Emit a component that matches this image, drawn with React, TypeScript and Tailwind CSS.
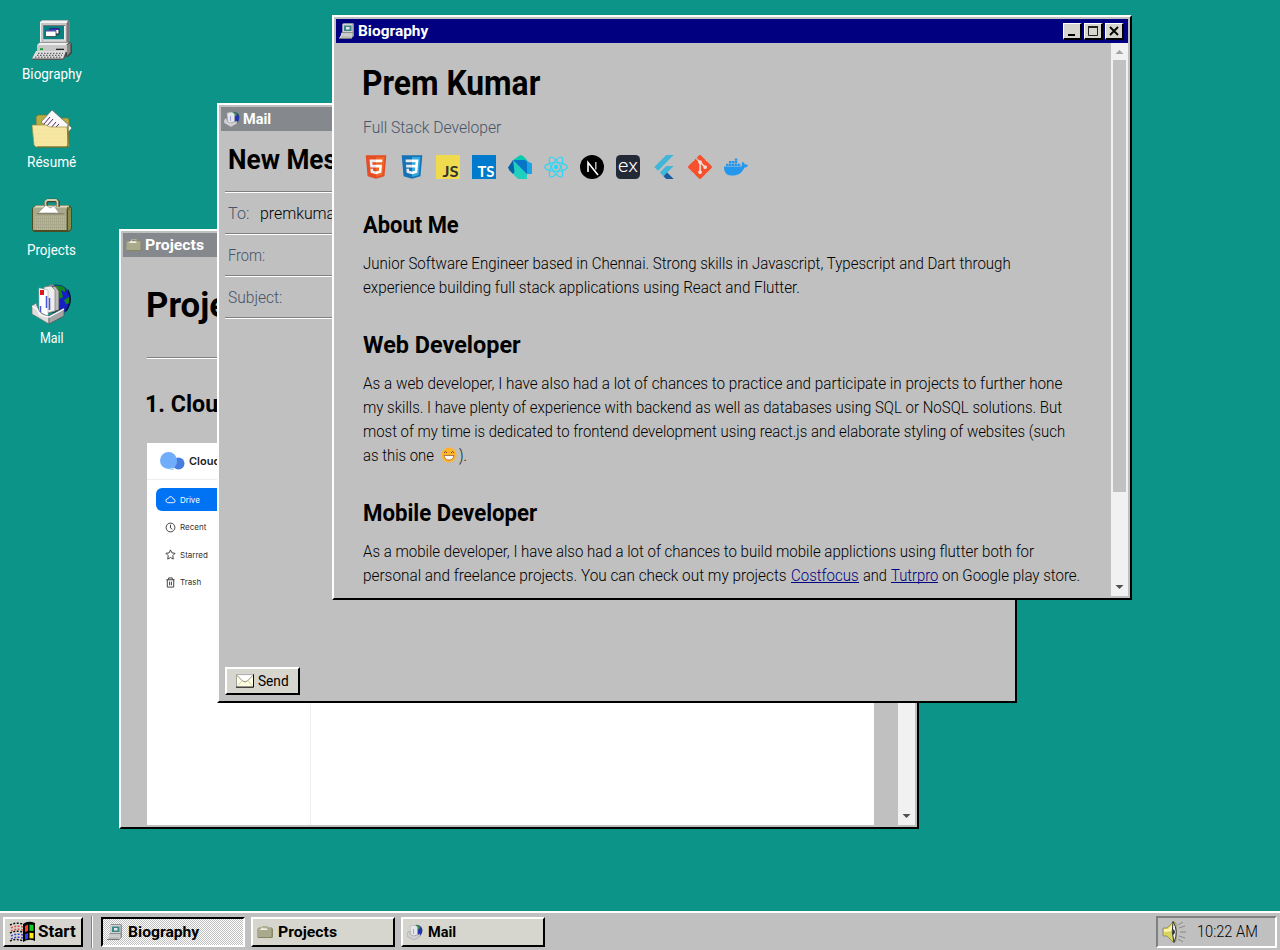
import { useLayoutEffect, useRef, useState } from "react";
import type { ReactNode } from "react";
import { SiDocker, SiGit } from "react-icons/si";

/* Single line of text whose glyphs are condensed to a given width. */
function Fit({ w, children, className = "" }: { w: number; children: ReactNode; className?: string }) {
  const ref = useRef<HTMLSpanElement>(null);
  const [scale, setScale] = useState(1);
  useLayoutEffect(() => {
    if (ref.current) setScale(w / ref.current.offsetWidth);
  }, [w]);
  return (
    <span className={`inline-block whitespace-nowrap ${className}`} style={{ width: w }}>
      <span ref={ref} className="inline-block origin-left" style={{ transform: `scaleX(${scale})` }}>
        {children}
      </span>
    </span>
  );
}

function ComputerIcon({ className }: { className: string }) {
  return (
    <svg viewBox="0 0 40 40" className={className}>
      <path d="M8 2 10 0H36L38 2V21L35 24H8z" fill="#808080" />
      <path d="M8 2H35V22H8z" fill="#c6c6c6" />
      <path d="M8 2 10 .5H36L35 2V3H9V22H8z" fill="#f2f2f2" />
      <path d="M35 3 37 1V21L34.5 24V3z" fill="#777" />
      <path d="M11 5H33V19H11z" fill="#777" />
      <path d="M12 6H32V19.500H12z" fill="#078080" />
      <path d="M32 6H33.500V20.500H12V19.500H32z" fill="#eee" />
      <path d="M18 8.500H27V14H18z" fill="#fff" stroke="#222" />
      <path d="M18 8.500H27V10H18z" fill="#3434c8" />
      <path d="M13.500 10.500H24V16.500H13.500z" fill="#fff" stroke="#333" strokeWidth=".7" />
      <path d="M13.500 10.300H24V11.500H13.500z" fill="#4646b4" />
      <path d="M5 25 9 22H38L40 24V33L36 37 5 31z" fill="#444" />
      <path d="M5 25H35V32H5z" fill="#c8c8c8" />
      <path d="M5 25 8 22.500H37L34 25z" fill="#efefef" />
      <path d="M35 25 38.500 22.500V32L35 36z" fill="#878787" />
      <path d="M8 28.300H11V30H8z" fill="#00a020" />
      <path d="M24 28.700H32V30H24z" fill="#222" />
      <path d="M4 31H34L33 38 31 40H1L0 38z" fill="#555" />
      <path d="M4 31H34L31 38.500H0z" fill="#dedede" />
      <path d="M6 33.300H31M5 35.300H30M3 37.200H29" stroke="#444" strokeWidth="1" strokeDasharray="1.500 1.500" />
    </svg>
  );
}

function ComputerMini() {
  return (
    <svg viewBox="0 0 16 16" className="h-4 w-4">
      <path d="M3.500 1 4.500 0H14L15 1V9L14 10H3.500z" fill="#8d9296" />
      <path d="M3.500 1H13.500V9.500H3.500z" fill="#d0d2d2" />
      <path d="M5 2.500H12.500V8H5z" fill="#3f8686" />
      <path d="M7 4H10.500V6.500H7z" fill="#dfe9ee" />
      <path d="M2 10 3.500 9H15V13L13.500 14.500 2 13z" fill="#8c8f8f" />
      <path d="M2 10H13.500V13H2z" fill="#c9cbca" />
      <path d="M1.500 12.500H13.500L12.500 15.500H0z" fill="#d8d9d8" />
      <path d="M2 14H12.500" stroke="#8f9292" strokeWidth=".8" />
      <path d="M0 15.500H12.500" stroke="#777" />
    </svg>
  );
}

function FolderIcon({ className }: { className: string }) {
  return (
    <svg viewBox="0 0 40 40" className={className}>
      <path d="M4 9 6 7H16L18 10H36L37 12V38H5z" fill="#b7ad45" stroke="#77712c" strokeWidth=".6" />
      <path d="M20 2 40 20 30 31 9 14z" fill="#f9f9f9" stroke="#666" strokeWidth=".7" />
      <path d="M18 9 12 16M21 11 14 19M24 14 18 21M27 16 21 22" stroke="#526" strokeWidth="1" />
      <path d="M0 17H14L18 19H35L37 38 35 39H4L2 37z" fill="#f6e8a2" stroke="#9a9148" strokeWidth=".7" />
      <path d="M36 17V37L35 39H5" fill="none" stroke="#6c6626" strokeWidth="1.200" />
      <path d="M2 22H35M3 26H35M3 30H36M4 34H36" stroke="#f3d79a" strokeDasharray="1 2" />
    </svg>
  );
}

function BriefcaseIcon({ className }: { className: string }) {
  return (
    <svg viewBox="0 -2 40 40" className={className}>
      <path d="M1 9 4 7H37L40 10V31L37 34H2L0 32V11z" fill="#4d4d24" />
      <path d="M36 9 39 10V31L36 33z" fill="#8a8a4c" />
      <path d="M1 10 4 8H37L35 11V32H1z" fill="#aaa88a" />
      <path d="M1 10 4 7.500H37L36 9.500H1z" fill="#dcdcc0" />
      <path d="M14 10V4L16 2.500H24L26 4V9" fill="none" stroke="#44442c" strokeWidth="3.400" />
      <path d="M13.500 9.500V3.500L15.500 2H24L25.500 3.500V9" fill="none" stroke="#d0d0ae" strokeWidth="1.800" />
      <path d="M6 15 14 7 18 10 22 8 27 15z" fill="#fff" stroke="#888" strokeWidth=".6" />
      <path d="M4 15H33L31 16.500H6z" fill="#85866a" />
      <path d="M3 19H34M3 22H34M3 25H34M3 28H34M3 31H34" stroke="#c8c6ad" strokeDasharray="1 1" />
      <path d="M35 9 38 12M35 11V32" stroke="#505028" strokeWidth=".8" />
    </svg>
  );
}

function BriefcaseMini() {
  return (
    <svg viewBox="0 0 16 16" className="h-4 w-4">
      <path d="M.5 5 2 3.500H14.500L16 5V13L15 14H1L.5 13z" fill="#868665" />
      <path d="M.5 5 2 4H14.500V13H.5z" fill="#a9a98b" />
      <path d="M5.500 4.500V2.500H10V4.500" fill="none" stroke="#aeae92" strokeWidth="1.200" />
      <path d="M2.500 6 5.500 3.500 7 4.500 9 4 11 6z" fill="#eeeee6" />
    </svg>
  );
}

function MailIcon({ className }: { className: string }) {
  return (
    <svg viewBox="0 0 40 40" className={className}>
      <circle cx="24.500" cy="15" r="14.500" fill="#075660" />
      <path d="M20 2C31-2 39 8 38 17S34 29 28 30z" fill="#1420c6" />
      <path d="M21 2C29 0 35 4 33 8L29 6 31 13 27 15 20 6zM32 16 37 13 38 19 34 20z" fill="#12861b" />
      <path d="M36 6Q41 17 34 27" fill="none" stroke="#071033" strokeWidth="1.500" />
      <path d="M12 4 20 0 26 4V25L12 29z" fill="#888" />
      <path d="M16 4 23 2 27 7V26L16 29z" fill="#bbb" stroke="#444" strokeWidth=".8" />
      <path d="M12 3 19 2 23 6V27L12 30z" fill="#eee" stroke="#777" strokeWidth=".7" />
      <path d="M7 4 16 6V32L7 28z" fill="#fff" stroke="#aaa" strokeWidth=".6" />
      <path d="M8 6H12V11H8z" fill="#df1717" />
      <path d="M14.500 12V24M17.500 14V26M8.500 22V29" stroke="#4b55d6" strokeWidth="1.500" />
      <path d="M0 22 4 19 7 27 12 31 17 32V40L0 30z" fill="#dedede" stroke="#666" strokeWidth=".6" />
      <path d="M17 32 32 24V32L17 40z" fill="#a5a5a5" stroke="#444" strokeWidth=".6" />
      <path d="M0 22 5 25 8 31 17 33 32 25" fill="none" stroke="#fff" strokeWidth="1.200" />
    </svg>
  );
}

function MailMini() {
  return (
    <svg viewBox="0 0 16 16" className="h-4 w-4">
      <circle cx="9.800" cy="6.500" r="5.700" fill="#265d72" />
      <path d="M10 1Q16 3 15 8T11 12z" fill="#2432ae" />
      <path d="M9 1Q13 1 13 4L11 6z" fill="#3f8c48" />
      <path d="M3 2 8 1 10.500 3V11L4 13z" fill="#e6e6ea" stroke="#aaa" strokeWidth=".5" />
      <path d="M6.500 5V10" stroke="#9da1df" />
      <path d="M0 9 2 7 4 11 7 12 13 10V12.500L7 16 0 12z" fill="#d2d2d4" stroke="#92929a" strokeWidth=".5" />
    </svg>
  );
}

function WindowsLogo() {
  return (
    <svg viewBox="0 0 27 22" className="h-[22px] w-[27px]">
      <path d="M14 3Q19-1 26 2V20Q20 17 14 21z" fill="#000" />
      <path d="M16 5 19 3.500V10L16 11z" fill="#ff3c28" />
      <path d="M20.500 3.500 24.500 4V10L20.500 9.700z" fill="#18c928" />
      <path d="M16 13 19 12V17.500L16 19z" fill="#3939fa" />
      <path d="M20.500 11.700 24.500 12V17.500L20.500 17.200z" fill="#ffe81c" />
      <g fill="none" strokeWidth="1.500" strokeDasharray="2 1.500">
        <path d="M1 4Q7 1 14 3M1 20Q7 17 14 20M1 12Q7 9 14 11" stroke="#111" />
        <path d="M2 7Q7 4 14 6M2 10Q7 7 14 9" stroke="#e34a46" />
        <path d="M2 15Q7 12 14 14M2 18Q7 15 14 17" stroke="#3d43ce" />
      </g>
    </svg>
  );
}

function SpeakerIcon() {
  return (
    <svg viewBox="0 0 24 24" className="h-6 w-6">
      <path d="M1 8H5L11 2 14 3V21L11 22 5 16H1z" fill="#d9d45f" stroke="#777034" strokeWidth=".6" />
      <path d="M2 9H6L11 4V11L2 12z" fill="#fbf6ac" />
      <path d="M11 1.500Q17 11 12 22.500 9 12 11 1.500z" fill="#eee" stroke="#333" strokeWidth="1" />
      <path d="M11 9Q15 12 11 15z" fill="#333" />
      <path d="M16 5 21 2M17 8 23 6M18 12H24M17 16 23 18M16 19 21 22" stroke="#858585" strokeWidth=".9" />
    </svg>
  );
}

const shield = "M19 113.900L9 1.600H119L109 113.900 64 126.400z";
const logo = "h-6 w-6 shrink-0";

function TechRow() {
  return (
    <div className="mt-4 flex gap-3 pl-px">
      <svg viewBox="0 0 128 128" className={logo}>
        <path d={shield} fill="#E44D26" />
        <path d="M64 116.800l36.400-10.100 8.500-95.900H64z" fill="#F16529" />
        <path d="M64 52.500H45.800L44.500 38.400H64V24.600H29.500L33.200 66.200H64zM64 88.200L48.600 84.100 47.600 73.100H33.800L35.700 94.700 64 102.500z" fill="#EBEBEB" />
        <path d="M64 52.500V66.200H80.900L79.300 84.100 64 88.200V102.500L92.200 94.700 96 52.500zM64 24.600V38.400H97.200L98.400 24.600z" fill="#fff" />
      </svg>
      <svg viewBox="0 0 128 128" className={logo}>
        <path d={shield} fill="#1572B6" />
        <path d="M64 116.800l36.400-10.100 8.500-95.900H64z" fill="#33A9DC" />
        <path d="M64 24.600H29.500L30.800 38.400H64zM64 52.500H32.300L33.500 66.200H64zM64 88.200L48.600 84 47.700 73H34L35.700 94.700 64 102.500z" fill="#EBEBEB" />
        <path d="M64 24.600H98.400L92.200 94.700 64 102.500V88.200L79.300 84 80.900 66.200H64V52.500H82L83 38.400H64z" fill="#fff" />
      </svg>
      <svg viewBox="0 0 24 24" className={logo}>
        <path d="M0 0H24V24H0z" fill="#F0DB4F" />
        <text x="6.500" y="22" textLength="16" lengthAdjust="spacingAndGlyphs" fontFamily="Lato" fontWeight="700" fontSize="15" fill="#323330">JS</text>
      </svg>
      <svg viewBox="0 0 24 24" className={logo}>
        <path d="M0 0H24V24H0z" fill="#007ACC" />
        <text x="5.500" y="22" textLength="17" lengthAdjust="spacingAndGlyphs" fontFamily="Lato" fontWeight="700" fontSize="15" fill="#fff">TS</text>
      </svg>
      <svg viewBox="0 0 24 24" className={logo}>
        <path d="M5 5 19 19V24H10L5 19z" fill="#20cfbd" />
        <path d="M5 5 0 12.500 1.500 15.500 5 19 6.500 17z" fill="#0563ab" />
        <path d="M5 5H16.500L24 8.500V19H19z" fill="#19a5e4" />
        <path d="M5 5 12 .3Q14 0 15 1L20.500 6.500 16.500 5z" fill="#05c9b0" />
        <path d="M5 5H16.500Q18 5 19 7V19z" fill="#0876c6" />
      </svg>
      <svg viewBox="0 0 24 24" className={logo}>
        <circle cx="12" cy="12" r="2.200" fill="#22d8fa" />
        <g fill="none" stroke="#22d8fa" strokeWidth="1.050">
          <ellipse cx="12" cy="12" rx="11.300" ry="4.300" />
          <ellipse cx="12" cy="12" rx="11.300" ry="4.300" transform="rotate(60 12 12)" />
          <ellipse cx="12" cy="12" rx="11.300" ry="4.300" transform="rotate(120 12 12)" />
        </g>
      </svg>
      <svg viewBox="0 0 24 24" className={logo}>
        <circle cx="12" cy="12" r="12" />
        <path d="M8 17V7.500L18 20" fill="none" stroke="#fff" strokeWidth="1.600" />
        <path d="M15.800 7V14.500" stroke="#bbb" strokeWidth="1.500" />
      </svg>
      <svg viewBox="0 0 24 24" className={logo}>
        <rect width="24" height="24" rx="4.500" fill="#242938" />
        <text x="2" y="17.300" textLength="20" lengthAdjust="spacingAndGlyphs" fontFamily="Roboto" fontWeight="300" fontSize="19" fill="#fff">ex</text>
      </svg>
      <svg viewBox="0 0 24 24" className={logo}>
        <path d="M14.300 0L2.300 12 6 15.700 21.700 0zM14.300 11.100L7.900 17.500 11.500 21.200 21.700 11.100z" fill="#40b6d8" />
        <path d="M11.500 21.200 15.200 17.500 21.700 24H14.300z" fill="#195b9f" />
      </svg>
      <span className="relative h-6 w-6 shrink-0">
        <span className="absolute inset-[5px] bg-[#f3dcd6]" />
        <SiGit className="relative h-6 w-6 text-[#f4512c]" />
      </span>
      <SiDocker className="h-6 w-6 shrink-0 text-[#2396ed]" />
    </div>
  );
}

function Frame({ className, title, titleWidth, icon, active = false, thumb = "", children }: {
  className: string; title: string; titleWidth: number; icon: ReactNode; active?: boolean; thumb?: string; children: ReactNode;
}) {
  const button = "flex h-[17px] w-[19px] items-center justify-center border-t border-l border-r-2 border-b-2 border-t-white border-l-white border-r-black border-b-black bg-[#d6d6ce]";
  return (
    <section className={`absolute flex w-[800px] flex-col border-2 border-t-white border-l-white border-r-black border-b-black bg-[#c0c0c0] p-0.5 ${className}`}>
      <header className={`flex h-6 shrink-0 items-center pr-1 pl-[3px] text-[15px] font-bold text-white ${active ? "bg-[#000080]" : "bg-[#85888c]"}`}>
        {icon}
        <Fit w={titleWidth} className="ml-[3px]">{title}</Fit>
        <div className="ml-auto flex gap-0.5">
          <span className={button}><svg viewBox="0 0 16 14" className="h-3.5 w-4"><path d="M4 10H11V12H4z" /></svg></span>
          <span className={button}><svg viewBox="0 0 16 14" className="h-3.5 w-4"><path d="M3.500 3V11.500H12.500V3z" fill="none" stroke="#222" /><path d="M3 2H13V4H3z" fill="#222" /></svg></span>
          <span className={button}><svg viewBox="0 0 16 14" className="h-3.5 w-4"><path d="M4 3 12 11M12 3 4 11" fill="none" stroke="#000" strokeWidth="1.800" /></svg></span>
        </div>
      </header>
      <div className="flex min-h-0 flex-1">
        <div className="min-w-0 flex-1 overflow-hidden">{children}</div>
        {thumb && (
          <div className="flex w-[17px] flex-col items-center bg-[#f1f1f1]">
            <svg viewBox="0 0 17 17" className="h-[17px] w-[17px]"><path d="M4.500 11H12.500L8.500 7z" fill="#a3a3a3" /></svg>
            <div className={`w-[13px] bg-[#c1c1c1] ${thumb}`} />
            <svg viewBox="0 0 17 17" className="mt-auto h-[17px] w-[17px]"><path d="M4.500 6H12.500L8.500 10z" fill="#505050" /></svg>
          </div>
        )}
      </div>
    </section>
  );
}

function Section({ title, w, children }: { title: string; w: number; children: ReactNode }) {
  return (
    <div className="mt-[30px]">
      <h2 className="h-8 text-[24px] leading-8 font-bold"><Fit w={w}>{title}</Fit></h2>
      <div className="mt-2.5 flex flex-col text-[17px] leading-6 font-light">{children}</div>
    </div>
  );
}

function Biography() {
  const link = "block h-5 border-b border-[#000080] text-[#000080]";
  return (
    <Frame className="top-[15px] left-[332px] h-[585px]" title="Biography" titleWidth={70} active thumb="h-[432px]" icon={<ComputerMini />}>
      <div className="pt-5 pl-[27px]">
        <h1 className="h-10 pt-px text-[35px] leading-10 font-bold"><Fit w={178} className="-ml-px">Prem Kumar</Fit></h1>
        <p className="mt-3 h-6 text-[17px] leading-6 font-light text-[#475569]"><Fit w={138}>Full Stack Developer</Fit></p>
        <TechRow />
        <Section title="About Me" w={96}>
          <Fit w={648}>Junior Software Engineer based in Chennai. Strong skills in Javascript, Typescript and Dart through</Fit>
          <Fit w={437}>experience building full stack applications using React and Flutter.</Fit>
        </Section>
        <Section title="Web Developer" w={158}>
          <Fit w={699}>As a web developer, I have also had a lot of chances to practice and participate in projects to further hone</Fit>
          <Fit w={699}>my skills. I have plenty of experience with backend as well as databases using SQL or NoSQL solutions. But</Fit>
          <Fit w={702}>most of my time is dedicated to frontend development using react.js and elaborate styling of websites (such</Fit>
          <div className="flex items-center">
            <Fit w={71}>as this one</Fit>
            <svg viewBox="0 0 16 16" className="mr-[2px] ml-[7px] h-4 w-4">
              <circle cx="8" cy="8" r="7.500" fill="#ffb52b" />
              <path d="M3 6Q4.500 3 6 6M10 6Q11.500 3 13 6" fill="none" stroke="#704327" />
              <path d="M3 8.500H13Q12 13 8 13T3 8.500z" fill="#fff" stroke="#8b512e" strokeWidth=".7" />
            </svg>
            <Fit w={8}>).</Fit>
          </div>
        </Section>
        <Section title="Mobile Developer" w={174}>
          <Fit w={671}>As a mobile developer, I have also had a lot of chances to build mobile applictions using flutter both for</Fit>
          <div className="flex gap-1">
            <Fit w={424}>personal and freelance projects. You can check out my projects</Fit>
            <a className={link}><Fit w={68}>Costfocus</Fit></a>
            <Fit w={24}>and</Fit>
            <a className={link}><Fit w={47}>Tutrpro</Fit></a>
            <Fit w={138}>on Google play store.</Fit>
          </div>
        </Section>
      </div>
    </Frame>
  );
}

function MailField({ label, w, children }: { label: string; w: number; children?: ReactNode }) {
  return (
    <div className="flex h-[42px] items-center gap-[11px] border-b border-b-white pl-[3px] text-[17px] font-light shadow-[inset_0_-1px_0_#808080]">
      <Fit w={w} className="text-[#475569]">{label}</Fit>
      {children}
    </div>
  );
}

function Mail() {
  return (
    <Frame className="top-[103px] left-[217px] h-[600px]" title="Mail" titleWidth={28} icon={<MailMini />}>
      <div className="flex h-full flex-col px-1 pb-1">
        <div className="h-[62px] border-b border-b-white pt-[9px] pl-[3px] text-[27px] leading-10 font-bold shadow-[inset_0_-1px_0_#808080]"><Fit w={166}>New Message</Fit></div>
        <MailField label="To:" w={21}><Fit w={80}>premkumar</Fit></MailField>
        <MailField label="From:" w={37} />
        <MailField label="Subject:" w={54} />
        <button className="mt-auto flex h-7 w-[75px] items-center gap-1 border-2 border-t-white border-l-white border-r-black border-b-black bg-[#d6d6ce] pl-[9px] text-[15px]">
          <svg viewBox="0 0 19 14" className="h-3.5 w-[18px]">
            <path d="M.5.5H18.500V13.500H.5z" fill="#ffffe1" stroke="#999" />
            <path d="M1 1 7 7Q9.500 9 12 7L18 1" fill="#fff" stroke="#8a8a78" />
            <path d="M1 13 6 7M18 13 13 7" fill="none" stroke="#d2d2b8" />
            <path d="M0 13.500H18.500V0" fill="none" stroke="#000" />
          </svg>
          <Fit w={31}>Send</Fit>
        </button>
      </div>
    </Frame>
  );
}

function SideRow({ children, label, active = false }: { children: ReactNode; label: string; active?: boolean }) {
  return (
    <div className={`flex h-[23px] w-[145px] items-center gap-1 rounded-md pl-[9px] text-[8px] ${active ? "bg-[#0073f5] text-white" : "text-[#333]"}`}>
      <svg viewBox="0 0 12 12" className="h-[11px] w-[11px]" fill="none" stroke="currentColor" strokeWidth="1" strokeLinejoin="round">{children}</svg>
      {label}
    </div>
  );
}

function Projects() {
  return (
    <Frame className="top-[229px] left-[119px] h-[600px]" title="Projects" titleWidth={59} thumb="h-[180px]" icon={<BriefcaseMini />}>
      <div className="pt-7 pr-6 pl-6">
        <h1 className="h-10 pt-px text-[35px] leading-10 font-bold"><Fit w={130} className="-ml-px">Projects</Fit></h1>
        <div className="mt-8 h-0.5 border-t border-b border-t-[#808080] border-b-white" />
        <h2 className="mt-[30px] h-8 text-[24px] leading-[31px] font-bold"><Fit w={86} className="-ml-0.5">1. Cloud</Fit></h2>
        <div className="mt-[22px] flex h-[400px] flex-col bg-white font-[Inter]">
          <div className="flex h-[37px] items-center gap-1 border-b border-[#eee] pl-[13px] text-[11px] font-semibold text-[#222]">
            <svg viewBox="0 0 25 18" className="h-[18px] w-[25px]">
              <circle cx="18.500" cy="11.500" r="6" fill="#487de0" />
              <circle cx="8.500" cy="8.500" r="8.500" fill="#70adfb" />
              <path d="M8.500 8.500H17Q17 16.500 9 17.500H14" fill="#70adfb" />
            </svg>
            Cloud
          </div>
          <div className="flex w-[164px] flex-1 flex-col gap-[4.500px] border-r border-[#eee] pt-2 pl-[9px]">
            <SideRow label="Drive" active><path d="M3 9.500Q1 9 1 7T3.500 5Q4.500 2 7 3 8.500 3.500 9 5.500 11 5.500 11 7.500 11 9.500 9 9.500z" /></SideRow>
            <SideRow label="Recent"><circle cx="6" cy="6" r="4.800" /><path d="M6 3V6.500L8 8" /></SideRow>
            <SideRow label="Starred"><path d="M6 1 7.500 4.200 11 4.700 8.500 7.200 9 11 6 9.300 3 11 3.500 7.200 1 4.700 4.500 4.200z" /></SideRow>
            <SideRow label="Trash"><path d="M1.500 3H10.500M4 3V1H8V3M2.500 3V11H9.500V3M5 5V9M7 5V9" /></SideRow>
          </div>
        </div>
      </div>
    </Frame>
  );
}

function DesktopIcon({ icon, label, w }: { icon: ReactNode; label: string; w: number }) {
  return (
    <div className="flex h-[88px] flex-col items-center text-white">
      {icon}
      <Fit w={w} className="mt-0.5 text-[15px] leading-6">{label}</Fit>
    </div>
  );
}

function Task({ icon, label, w, pressed = false }: { icon: ReactNode; label: string; w: number; pressed?: boolean }) {
  return (
    <div className={`flex h-[30px] w-36 items-center gap-[5px] border-2 pt-px pl-1 ${pressed ? "border-t-black border-l-black border-r-white border-b-white bg-[#d2d2d2] bg-[conic-gradient(#fff_25%,#c0c0c0_0_50%,#fff_0_75%,#c0c0c0_0)] bg-[length:2px_2px]" : "border-t-white border-l-white border-r-black border-b-black bg-[#d6d6ce]"}`}>
      {icon}
      <Fit w={w}>{label}</Fit>
    </div>
  );
}

export default function App() {
  return (
    <div className="relative flex h-[950px] w-[1280px] flex-col overflow-hidden bg-[#0d9488] font-[Roboto,'Liberation_Sans',sans-serif] text-black">
      <nav className="flex w-[103px] flex-1 flex-col pt-5">
        <DesktopIcon label="Biography" w={60} icon={<ComputerIcon className="h-10 w-10" />} />
        <DesktopIcon label="Résumé" w={49} icon={<FolderIcon className="h-10 w-10" />} />
        <DesktopIcon label="Projects" w={49} icon={<BriefcaseIcon className="h-10 w-10" />} />
        <DesktopIcon label="Mail" w={24} icon={<MailIcon className="h-10 w-10" />} />
      </nav>
      <Projects />
      <Mail />
      <Biography />
      <footer className="flex h-[39px] items-center border-t-2 border-white bg-[#c0c0c0] pr-[3px] pl-[3px] text-[15px] font-bold">
        <div className="flex h-[30px] w-20 items-center gap-0.5 border-2 border-t-white border-l-white border-r-black border-b-black bg-[#d6d6ce] pl-1 text-[17px]">
          <WindowsLogo />
          <Fit w={38}>Start</Fit>
        </div>
        <div className="mr-2 ml-2 h-8 w-0.5 border-r border-l border-r-white border-l-[#808080]" />
        <div className="flex gap-1.5">
          <Task pressed label="Biography" w={71} icon={<ComputerMini />} />
          <Task label="Projects" w={59} icon={<BriefcaseMini />} />
          <Task label="Mail" w={28} icon={<MailMini />} />
        </div>
        <div className="ml-auto flex h-8 w-[121px] items-center gap-[11px] border-2 border-t-[#808080] border-l-[#808080] border-r-white border-b-white pl-1 text-[17px] font-light">
          <SpeakerIcon />
          <Fit w={61}>10:22 AM</Fit>
        </div>
      </footer>
    </div>
  );
}
